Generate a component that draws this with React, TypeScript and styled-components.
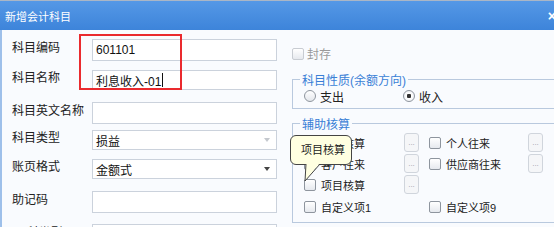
import { Fragment } from "react";
import styled, { createGlobalStyle } from "styled-components";

const GlobalStyle = createGlobalStyle`
  html, body {
    margin: 0;
    padding: 0;
    overflow: hidden;
    background: #f9fbfe;
  }
  body {
    font-family: "Liberation Sans", "Noto Sans CJK SC", sans-serif;
    color: #222;
  }
`;

const Window = styled.div`
  position: relative;
  width: 580px;
  height: 227px;
  overflow: hidden;
  background: #f9fbfe;
`;

const TitleBar = styled.div`
  height: 30px;
  box-sizing: border-box;
  border-top: 1px solid #aab6c6;
  background: linear-gradient(to bottom, #5598e6, #3d84da);
  display: flex;
  align-items: center;
  justify-content: space-between;
  padding: 0 24px 0 5px;
  color: #fff;
  font-size: 11px;
`;

const Close = styled.span`
  font-size: 14px;
  font-weight: bold;
`;

const Body = styled.div`
  display: flex;
  height: 197px;
  border-left: 2px solid #9ec0ea;
`;

const LeftCol = styled.div`
  width: 280px;
  padding-left: 10px;
  display: flex;
  flex-direction: column;
`;

const Row = styled.div<{ $top: number }>`
  display: flex;
  align-items: center;
  margin-top: ${(p) => p.$top}px;
`;

const Label = styled.div`
  width: 80px;
  font-size: 12px;
  line-height: 14px;
  margin-bottom: 5px;
  color: #222;
`;

const Field = styled.div<{ $h: number }>`
  width: 185px;
  height: ${(p) => p.$h}px;
  box-sizing: border-box;
  border: 1px solid #cbd2dc;
  background: #fff;
  display: flex;
  align-items: center;
  padding-left: 3px;
  font-size: 12px;
  color: #111;
`;

const Caret = styled.span`
  display: inline-block;
  width: 1px;
  height: 14px;
  background: #111;
  margin-left: 1px;
`;

const Arrow = styled.span<{ $off?: boolean }>`
  margin-left: auto;
  margin-right: 6px;
  width: 0;
  height: 0;
  border-left: 3.5px solid transparent;
  border-right: 3.5px solid transparent;
  border-top: 4px solid ${(p) => (p.$off ? "#c4c8ce" : "#444")};
`;

const RightCol = styled.div`
  flex: 1;
  display: flex;
  flex-direction: column;
`;

const SealRow = styled.div`
  display: flex;
  align-items: center;
  gap: 3px;
  margin-top: 15px;
  font-size: 12px;
  color: #9a9a9a;
`;

const Box = styled.span<{ $off?: boolean }>`
  display: inline-block;
  width: 10px;
  height: 10px;
  border: 1px solid ${(p) => (p.$off ? "#c8ccd2" : "#8e959e")};
  border-radius: 2px;
  background: linear-gradient(to bottom, #fff, #e6e9ee);
  flex-shrink: 0;
`;

const Group = styled.fieldset<{ $top: number }>`
  margin: ${(p) => p.$top}px 0 0 0;
  padding: 0 0 3px 11px;
  border: 1px solid #b9c9de;
  min-width: 0;
`;

const Legend = styled.legend`
  margin-left: -4px;
  padding: 3px 2px 0 2px;
  font-size: 12px;
  line-height: 12px;
  color: #3a7fd6;
`;

const RadioRow = styled.div`
  display: flex;
  height: 18px;
  align-items: center;
`;

const RadioItem = styled.label`
  width: 99px;
  display: flex;
  align-items: center;
  gap: 4px;
  font-size: 12px;
  color: #222;
`;

const Radio = styled.span<{ $on?: boolean }>`
  width: 12px;
  height: 12px;
  box-sizing: border-box;
  border-radius: 50%;
  border: 1px solid #8e959e;
  background: ${(p) =>
    p.$on
      ? "radial-gradient(circle, #333 0 2px, #fff 2.5px, #e6e9ee 100%)"
      : "linear-gradient(to bottom, #fff, #e4e7ec)"};
`;

const AuxGrid = styled.div`
  display: grid;
  grid-template-columns: 100px 25px 99px 15px;
  grid-template-rows: 21px 21px 21px 24px;
  margin-top: 1px;
`;

const Check = styled.label<{ $col: number; $row: number }>`
  grid-column: ${(p) => p.$col};
  grid-row: ${(p) => p.$row};
  display: flex;
  align-items: center;
  gap: 5px;
  font-size: 11px;
  color: #222;
`;

const More = styled.span<{ $col: number; $row: number }>`
  grid-column: ${(p) => p.$col};
  grid-row: ${(p) => p.$row};
  align-self: center;
  width: 15px;
  height: 19px;
  box-sizing: border-box;
  border: 1px solid #d0d5dc;
  border-radius: 3px;
  background: #f5f6f8;
  color: #9aa0a8;
  font-size: 8px;
  line-height: 8px;
  display: flex;
  align-items: flex-end;
  justify-content: center;
  padding-bottom: 4px;
`;

const Mark = styled.div`
  position: absolute;
  left: 79px;
  top: 34px;
  width: 103px;
  height: 56px;
  box-sizing: border-box;
  border: 2px solid #ea2a2e;
`;

const Tip = styled.div`
  position: absolute;
  left: 290px;
  top: 135px;
  width: 62px;
  height: 30px;
  box-sizing: border-box;
  border: 1px solid #444;
  border-radius: 6px;
  background: #ffffe1;
  font-size: 11px;
  line-height: 28px;
  padding-left: 10px;
  color: #222;
`;

const Tail = styled.svg`
  position: absolute;
  left: 300px;
  top: 163px;
`;

const aux: [string, number, number, boolean][] = [
  ["部门核算", 1, 1, true],
  ["个人往来", 3, 1, true],
  ["客户往来", 1, 2, true],
  ["供应商往来", 3, 2, true],
  ["项目核算", 1, 3, true],
  ["自定义项1", 1, 4, false],
  ["自定义项9", 3, 4, false],
];

export default function App() {
  return (
    <>
      <GlobalStyle />
      <Window>
        <TitleBar>
          <span>新增会计科目</span>
          <Close>×</Close>
        </TitleBar>
        <Body>
          <LeftCol>
            <Row $top={9}>
              <Label>科目编码</Label>
              <Field $h={22}>601101</Field>
            </Row>
            <Row $top={9}>
              <Label>科目名称</Label>
              <Field $h={20}>
                利息收入-01
                <Caret />
              </Field>
            </Row>
            <Row $top={12}>
              <Label>科目英文名称</Label>
              <Field $h={22} />
            </Row>
            <Row $top={6}>
              <Label>科目类型</Label>
              <Field $h={20}>
                损益
                <Arrow $off />
              </Field>
            </Row>
            <Row $top={9}>
              <Label>账页格式</Label>
              <Field $h={20}>
                金额式
                <Arrow />
              </Field>
            </Row>
            <Row $top={12}>
              <Label>助记码</Label>
              <Field $h={22} />
            </Row>
            <Row $top={11}>
              <Label>(a)科类型</Label>
              <Field $h={22} />
            </Row>
          </LeftCol>
          <RightCol>
            <SealRow>
              <Box $off />
              封存
            </SealRow>
            <Group $top={10}>
              <Legend>科目性质(余额方向)</Legend>
              <RadioRow>
                <RadioItem>
                  <Radio />
                  支出
                </RadioItem>
                <RadioItem>
                  <Radio $on />
                  收入
                </RadioItem>
              </RadioRow>
            </Group>
            <Group $top={7}>
              <Legend>辅助核算</Legend>
              <AuxGrid>
                {aux.map(([text, col, row, more]) => (
                  <Fragment key={text}>
                    <Check $col={col} $row={row}>
                      <Box />
                      {text}
                    </Check>
                    {more && (
                      <More $col={col + 1} $row={row}>
                        ...
                      </More>
                    )}
                  </Fragment>
                ))}
              </AuxGrid>
            </Group>
          </RightCol>
        </Body>
        <Mark />
        <Tip>项目核算</Tip>
        <Tail width="22" height="20" viewBox="0 0 22 20">
          <polygon points="6,0 5,18 20,0" fill="#ffffe1" />
          <polyline points="6,1 5,18 20,1" fill="none" stroke="#444" strokeWidth="1" />
        </Tail>
      </Window>
    </>
  );
}
